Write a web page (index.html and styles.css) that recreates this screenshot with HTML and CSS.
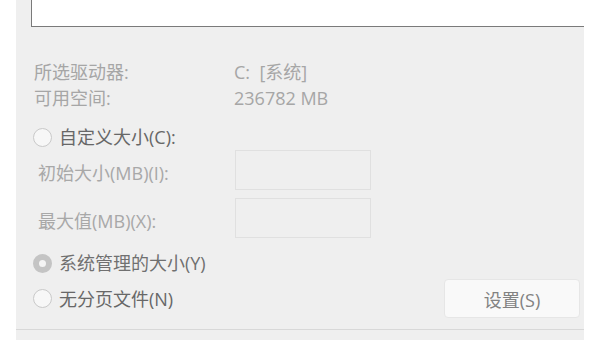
FILE: index.html
```html
<!DOCTYPE html>
<html lang="zh-CN">
<head>
<meta charset="utf-8">
<link rel="stylesheet" href="styles.css">
</head>
<body>
<div class="panel">
  <div class="drive-list"></div>
  <div class="info">
    <span class="info-label">所选驱动器:</span><span class="info-value">C:&nbsp; [系统]</span>
    <span class="info-label">可用空间:</span><span class="info-value">236782 MB</span>
  </div>
  <div class="radio-row radio-custom">
    <span class="radio"></span><span class="radio-text">自定义大小(C):</span>
  </div>
  <div class="size-fields">
    <div class="field-row"><span class="field-label">初始大小(MB)(I):</span><span class="field-input"></span></div>
    <div class="field-row"><span class="field-label">最大值(MB)(X):</span><span class="field-input"></span></div>
  </div>
  <div class="radio-row radio-system">
    <span class="radio checked"></span><span class="radio-text">系统管理的大小(Y)</span>
  </div>
  <div class="radio-row radio-none">
    <span class="radio"></span><span class="radio-text">无分页文件(N)</span>
    <button class="set-btn">设置(S)</button>
  </div>
  <div class="separator"></div>
</div>
</body>
</html>
```

FILE: styles.css
```css
html, body {
  margin: 0;
  padding: 0;
  background: #ffffff;
}
body {
  font-family: "Open Sans", "Noto Sans CJK SC", sans-serif;
  font-size: 18px;
}
.panel {
  margin-left: 16px;
  width: 568px;
  height: 340px;
  background: #efefef;
  overflow: hidden;
  display: flex;
  flex-direction: column;
}
.drive-list {
  margin-left: 15px;
  width: 600px;
  height: 27px;
  box-sizing: border-box;
  background: #ffffff;
  border-left: 1px solid #7a7a7a;
  border-bottom: 1px solid #7a7a7a;
  flex-shrink: 0;
}
.info {
  margin-top: 32px;
  padding-left: 18px;
  display: grid;
  grid-template-columns: 200px 1fr;
  grid-auto-rows: 26px;
  line-height: 26px;
  color: #a6a6a6;
}
.radio-row {
  display: flex;
  align-items: center;
  padding-left: 17px;
  line-height: 26px;
  color: #676767;
}
.radio-custom {
  margin-top: 13px;
  height: 26px;
}
.radio {
  width: 19px;
  height: 19px;
  box-sizing: border-box;
  border-radius: 50%;
  border: 1px solid #c9c9c9;
  background: #f7f7f7;
  margin-right: 7px;
  flex-shrink: 0;
}
.radio.checked {
  border: 6px solid #c4c4c4;
  background: #f4f4f4;
}
.size-fields {
  display: flex;
  flex-direction: column;
  gap: 8px;
}
.field-row {
  display: flex;
  align-items: center;
  height: 40px;
  padding-left: 22px;
  color: #a8a8a8;
}
.field-label {
  width: 197px;
  padding-top: 3px;
}
.field-input {
  width: 136px;
  height: 40px;
  box-sizing: border-box;
  border: 1px solid #e0e0e0;
  background: #efefef;
}
.radio-system {
  margin-top: 12px;
  height: 26px;
  color: #707070;
}
.radio-none {
  margin-top: 3px;
  height: 39px;
}
.set-btn {
  margin-left: auto;
  margin-right: 4px;
  width: 136px;
  height: 39px;
  box-sizing: border-box;
  border: 1px solid #e6e6e6;
  border-radius: 4px;
  background: #f9f9f9;
  color: #828282;
  font-family: inherit;
  font-size: 18px;
  padding: 0;
}
.separator {
  margin-top: 11px;
  border-top: 1px solid #d8d8d8;
}
```
